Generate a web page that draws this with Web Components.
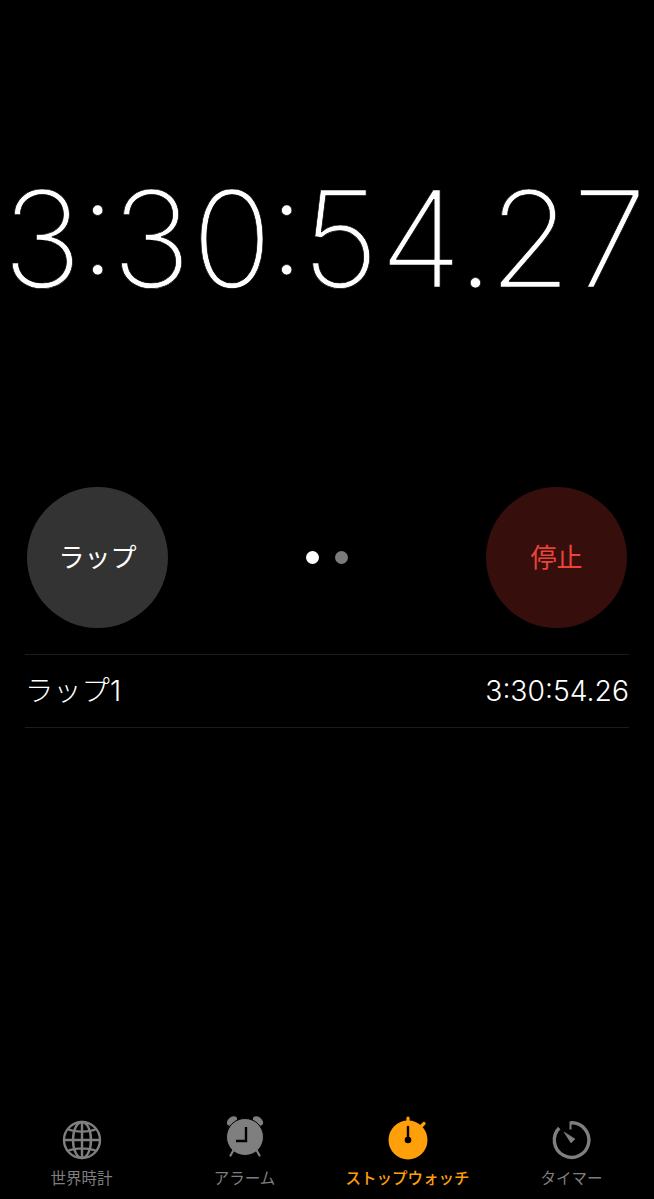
<!DOCTYPE html>
<html lang="ja">
<head>
<meta charset="utf-8">
<title>ストップウォッチ</title>
<style>
  html, body { margin: 0; background: #000; }
  body { font-family: "Inter", "Noto Sans CJK JP", sans-serif; }
</style>
</head>
<body>
<stopwatch-screen>
  <time-readout slot="time">3:30:54.27</time-readout>
  <round-button slot="left" tone="gray">ラップ</round-button>
  <round-button slot="right" tone="red">停止</round-button>
  <lap-row slot="laps" name="ラップ1" time="3:30:54.26"></lap-row>
  <tab-item slot="tabs" label="世界時計" icon="globe"></tab-item>
  <tab-item slot="tabs" label="アラーム" icon="alarm"></tab-item>
  <tab-item slot="tabs" label="ストップウォッチ" icon="stopwatch" active></tab-item>
  <tab-item slot="tabs" label="タイマー" icon="timer"></tab-item>
</stopwatch-screen>

<script>
const FONT = '"Inter", "Noto Sans CJK JP", sans-serif';

// Tab bar glyphs, all on a 40x40 box (knobs and bells stick out above it)
const ICONS = {
  globe: `
    <g fill="none" stroke="currentColor" stroke-width="2.4">
      <circle cx="20" cy="20" r="18"/>
      <ellipse cx="20" cy="20" rx="9" ry="18"/>
      <path d="M20 2v36M2 20h36M5.500 9c8 3.500 21 3.500 29 0M5.500 31c8-3.500 21-3.500 29 0"/>
    </g>`,
  alarm: `
    <ellipse cx="7" cy="1" rx="5.800" ry="4" transform="rotate(-39 7 1)" fill="currentColor"/>
    <ellipse cx="33" cy="1" rx="5.800" ry="4" transform="rotate(39 33 1)" fill="currentColor"/>
    <circle cx="20" cy="17" r="18.500" fill="currentColor" stroke="#000" stroke-width="1"/>
    <path d="M8 31 5.500 35.500M32 31l2.500 4.500" stroke="currentColor" stroke-width="2.200" stroke-linecap="round"/>
    <path d="M21 7v14H11" fill="none" stroke="#000" stroke-width="2.400"/>`,
  stopwatch: `
    <circle cx="20" cy="20" r="19.500" fill="currentColor"/>
    <path d="M20 1V-2M33 6.500l3-3" stroke="currentColor" stroke-width="3.200" stroke-linecap="round"/>
    <path d="M20 7v13" stroke="#000" stroke-width="2.400" stroke-linecap="round"/>
    <circle cx="20" cy="20" r="3.300" fill="#000"/>`,
  timer: `
    <path d="M18.500 2.800a17.300 17.300 0 1 1-11.300 5.200" fill="none" stroke="currentColor" stroke-width="3.400"/>
    <path d="M18.500 1.500v8" stroke="currentColor" stroke-width="2" fill="none"/>
    <path d="M12 12 23 19 19 23z" fill="currentColor" stroke="currentColor" stroke-width=".6" stroke-linejoin="round"/>`
};

class StopwatchScreen extends HTMLElement {
  constructor() {
    super();
    this.attachShadow({ mode: 'open' });
    this.shadowRoot.innerHTML = `
      <style>
        :host {
          display: flex;
          flex-direction: column;
          width: 654px;
          height: 1199px;
          overflow: hidden;
          background: #000;
          color: #fff;
        }
        #time { padding-top: 164px; height: 487px; box-sizing: border-box; }
        #controls {
          display: flex;
          align-items: center;
          justify-content: space-between;
          padding: 0 27px;
          height: 141px;
        }
        #dots { display: flex; gap: 16px; }
        #dots i { width: 13px; height: 13px; border-radius: 50%; background: #fff; }
        #dots i + i { background: #7b7b7b; }
        #laps {
          margin: 26px 25px 0;
          flex: 1;
          border-top: 1px solid #1c1c1e;
        }
        #tabs {
          display: grid;
          grid-template-columns: 163px 163px 163px 165px;
          height: 84px;
        }
      </style>
      <div id="time"><slot name="time"></slot></div>
      <div id="controls">
        <slot name="left"></slot>
        <div id="dots"><i></i><i></i></div>
        <slot name="right"></slot>
      </div>
      <div id="laps"><slot name="laps"></slot></div>
      <div id="tabs"><slot name="tabs"></slot></div>
    `;
  }
}

class TimeReadout extends HTMLElement {
  constructor() {
    super();
    this.attachShadow({ mode: 'open' });
    this.shadowRoot.innerHTML = `
      <style>
        :host {
          display: block;
          font-family: ${FONT};
          font-weight: 200;
          font-size: 133px;
          line-height: 150px;
          letter-spacing: -6.2px;
          white-space: nowrap;
          font-variant-numeric: tabular-nums;
          font-feature-settings: "case", "tnum";
          -webkit-text-stroke: 0.7px #000; /* thins the 200 weight down to the reference stroke */
          color: #fff;
        }
      </style>
      <slot></slot>
    `;
  }
}

class RoundButton extends HTMLElement {
  constructor() {
    super();
    this.attachShadow({ mode: 'open' });
    this.shadowRoot.innerHTML = `
      <style>
        :host {
          display: flex;
          align-items: center;
          justify-content: center;
          box-sizing: border-box;
          width: 141px;
          height: 141px;
          padding-bottom: 4px;
          border-radius: 50%;
          font-family: ${FONT};
          font-size: 26px;
          background: #333;
          color: #fff;
        }
        :host([tone="red"]) { background: #360f0c; color: #ea4339; }
      </style>
      <slot></slot>
    `;
  }
}

class LapRow extends HTMLElement {
  constructor() {
    super();
    this.attachShadow({ mode: 'open' });
    this.shadowRoot.innerHTML = `
      <style>
        :host {
          display: flex;
          align-items: baseline;
          justify-content: space-between;
          box-sizing: border-box;
          height: 73px;
          padding-top: 18px;
          line-height: 36px;
          border-bottom: 1px solid #1c1c1e;
          font-family: ${FONT};
          font-size: 28.3px;
          font-weight: 300;
          color: #fff;
        }
      </style>
      <span id="name"></span><span id="time"></span>
    `;
  }

  connectedCallback() {
    this.shadowRoot.getElementById('name').textContent = this.getAttribute('name');
    this.shadowRoot.getElementById('time').textContent = this.getAttribute('time');
  }
}

class TabItem extends HTMLElement {
  constructor() {
    super();
    this.attachShadow({ mode: 'open' });
    this.shadowRoot.innerHTML = `
      <style>
        :host {
          display: flex;
          flex-direction: column;
          align-items: center;
          font-family: ${FONT};
          font-size: 15.5px;
          color: #7f7f7f;
        }
        :host([active]) { color: #ff9f0a; font-weight: 500; }
        svg { display: block; width: 40px; height: 40px; margin-top: 5px; overflow: visible; }
        span { margin-top: 8px; line-height: 22px; white-space: nowrap; }
      </style>
      <svg viewBox="0 0 40 40" aria-hidden="true"></svg>
      <span></span>
    `;
  }

  connectedCallback() {
    this.shadowRoot.querySelector('svg').innerHTML = ICONS[this.getAttribute('icon')];
    this.shadowRoot.querySelector('span').textContent = this.getAttribute('label');
  }
}

customElements.define('stopwatch-screen', StopwatchScreen);
customElements.define('time-readout', TimeReadout);
customElements.define('round-button', RoundButton);
customElements.define('lap-row', LapRow);
customElements.define('tab-item', TabItem);
</script>
</body>
</html>
